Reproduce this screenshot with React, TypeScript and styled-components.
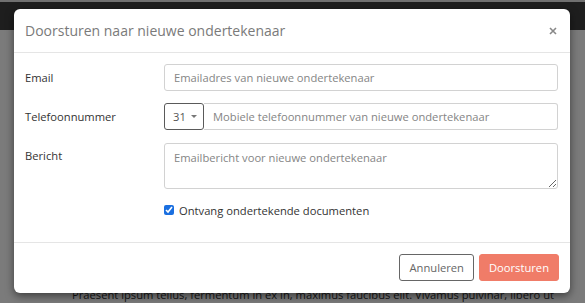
import React from 'react';
import styled, { createGlobalStyle } from 'styled-components';

const GlobalStyle = createGlobalStyle`
  html, body {
    margin: 0;
    padding: 0;
    width: 585px;
    height: 303px;
    overflow: hidden;
    background: #7b7b7b;
    font-family: "Open Sans", "Liberation Sans", sans-serif;
  }
`;

const Page = styled.div`
  position: relative;
  width: 585px;
  height: 303px;
  display: flex;
  flex-direction: column;
  background: #7b7b7b;
`;

const TopStrip = styled.div`
  height: 2px;
  background: #707070;
`;

const Navbar = styled.div`
  height: 28px;
  background: #1e1e1e;
`;

const Content = styled.div`
  flex: 1;
  display: flex;
  flex-direction: column;
  justify-content: flex-end;
  padding: 0 0 2px 72px;
`;

const BodyText = styled.p`
  margin: 0;
  font-size: 11.2px;
  line-height: 13px;
  color: #151515;
  white-space: nowrap;
`;

const Modal = styled.div`
  position: absolute;
  left: 14px;
  top: 9px;
  width: 556px;
  height: 284px;
  background: #fff;
  border-radius: 6px;
  box-shadow: 0 3px 9px rgba(0, 0, 0, 0.5);
  display: flex;
  flex-direction: column;
`;

const Header = styled.div`
  height: 44px;
  box-sizing: border-box;
  border-bottom: 1px solid #e5e5e5;
  display: flex;
  align-items: center;
  justify-content: space-between;
  padding: 0 12px 0 11px;
`;

const Title = styled.h4`
  margin: 0;
  font-size: 14px;
  font-weight: 400;
  color: #7a7a7a;
`;

const Close = styled.button`
  border: none;
  background: none;
  padding: 0;
  width: 10px;
  height: 10px;
  cursor: pointer;
  display: flex;
`;

const Body = styled.div`
  flex: 1;
  display: grid;
  grid-template-columns: 139px 1fr;
  grid-auto-rows: min-content;
  row-gap: 12px;
  padding: 11px 12px 0 11px;
`;

const Label = styled.label`
  font-size: 11.2px;
  line-height: 27px;
  color: #333;
`;

const Input = styled.input`
  box-sizing: border-box;
  width: 100%;
  height: 27px;
  border: 1px solid #d2d2d2;
  border-radius: 3px;
  padding: 0 9px;
  font-family: inherit;
  font-size: 11.2px;
  color: #333;
  outline: none;
  &::placeholder {
    color: #858585;
  }
`;

const InputGroup = styled.div`
  display: flex;
`;

const CountryButton = styled.button`
  box-sizing: border-box;
  width: 40px;
  height: 27px;
  border: 1px solid #5a5a5a;
  border-radius: 3px;
  background: #fff;
  padding: 0 0 0 8px;
  display: flex;
  align-items: center;
  gap: 5px;
  font-family: inherit;
  font-size: 11.2px;
  color: #555;
`;

const Caret = styled.span`
  width: 0;
  height: 0;
  border-left: 3px solid transparent;
  border-right: 3px solid transparent;
  border-top: 3px solid #777;
`;

const PhoneInput = styled(Input)`
  flex: 1;
  border-left: none;
  border-radius: 0 3px 3px 0;
`;

const TextArea = styled.textarea`
  box-sizing: border-box;
  width: 100%;
  height: 46px;
  margin-top: 1px;
  border: 1px solid #d2d2d2;
  border-radius: 3px;
  padding: 6px 9px;
  font-family: inherit;
  font-size: 11.2px;
  color: #333;
  outline: none;
  resize: vertical;
  display: block;
  &::placeholder {
    color: #858585;
  }
`;

const CheckRow = styled.label`
  grid-column: 2;
  display: flex;
  align-items: center;
  gap: 5px;
  font-size: 11.2px;
  color: #333;
  height: 18px;
`;

const CheckBox = styled.input`
  margin: 0;
  width: 10px;
  height: 10px;
  accent-color: #1a6fe0;
`;

const Footer = styled.div`
  border-top: 1px solid #e5e5e5;
  display: flex;
  justify-content: flex-end;
  gap: 5px;
  padding: 11px 11px 12px;
`;

const Button = styled.button<{ $primary?: boolean }>`
  height: 27px;
  box-sizing: border-box;
  padding: 0 9px;
  border-radius: 3px;
  font-family: inherit;
  font-size: 11.2px;
  cursor: pointer;
  border: 1px solid ${(p) => (p.$primary ? '#f07c68' : '#666')};
  background: ${(p) => (p.$primary ? '#f07c68' : '#fff')};
  color: ${(p) => (p.$primary ? '#fff' : '#666')};
`;

export default function App() {
  return (
    <>
      <GlobalStyle />
      <Page>
        <TopStrip />
        <Navbar />
        <Content>
          <BodyText>
            Praesent ipsum tellus, fermentum in ex in, maximus faucibus elit. Vivamus pulvinar, libero ut
          </BodyText>
        </Content>
        <Modal>
          <Header>
            <Title>Doorsturen naar nieuwe ondertekenaar</Title>
            <Close aria-label="Sluiten">
              <svg width="10" height="10" viewBox="0 0 10 10">
                <path d="M2 2 L8 8 M8 2 L2 8" stroke="#888" strokeWidth="1.6" />
              </svg>
            </Close>
          </Header>
          <Body>
            <Label>Email</Label>
            <Input placeholder="Emailadres van nieuwe ondertekenaar" />
            <Label>Telefoonnummer</Label>
            <InputGroup>
              <CountryButton>
                31 <Caret />
              </CountryButton>
              <PhoneInput placeholder="Mobiele telefoonnummer van nieuwe ondertekenaar" />
            </InputGroup>
            <Label>Bericht</Label>
            <TextArea placeholder="Emailbericht voor nieuwe ondertekenaar" />
            <CheckRow>
              <CheckBox type="checkbox" defaultChecked />
              Ontvang ondertekende documenten
            </CheckRow>
          </Body>
          <Footer>
            <Button>Annuleren</Button>
            <Button $primary>Doorsturen</Button>
          </Footer>
        </Modal>
      </Page>
    </>
  );
}
